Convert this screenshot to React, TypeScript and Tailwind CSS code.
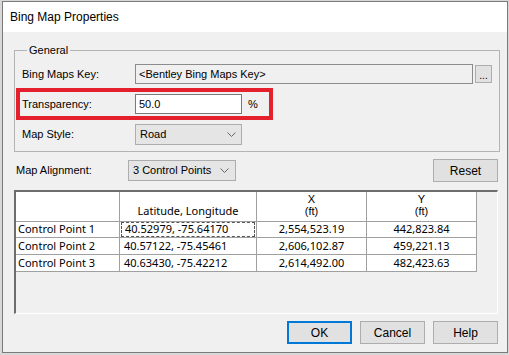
import React from 'react';

const Chevron: React.FC = () => (
  <svg width="9" height="6" viewBox="0 0 9 6" className="shrink-0">
    <polyline points="0.5,0.5 4.5,4.5 8.5,0.5" fill="none" stroke="#666" strokeWidth="1" />
  </svg>
);

const rows = [
  { name: 'Control Point 1', latLon: '40.52979, -75.64170', x: '2,554,523.19', y: '442,823.84' },
  { name: 'Control Point 2', latLon: '40.57122, -75.45461', x: '2,606,102.87', y: '459,221.13' },
  { name: 'Control Point 3', latLon: '40.63430, -75.42212', x: '2,614,492.00', y: '482,423.63' },
];

const ui = { fontFamily: '"Liberation Sans", Arial, sans-serif' };
const grid = { fontFamily: '"Noto Sans", "Open Sans", sans-serif' };

const App: React.FC = () => {
  return (
    <div className="w-[509px] h-[355px] overflow-hidden bg-[#d8d8d8] pt-[1px] pl-[2px]" style={ui}>
      <div className="w-[506px] h-[352px] border border-[#7a7a7a] flex flex-col bg-[#f0f0f0] text-black">
        {/* Title bar */}
        <div className="h-[30px] bg-white flex items-center pl-[7px] text-[12px]">Bing Map Properties</div>

        {/* Body */}
        <div className="flex-1 pt-[11px] pl-[11px] pr-[9px] text-[11px]">
          <fieldset className="w-[484px] border border-[#b4b4b4] px-[7px] pb-[6px]">
            <legend className="ml-[5px] px-[2px] leading-[14px]">General</legend>

            <div className="flex items-center h-[20px] mt-[7px]">
              <div className="w-[113px]">Bing Maps Key:</div>
              <div className="w-[338px] h-[20px] bg-[#f0f0f0] border border-[#8c8c8c] flex items-center pl-[3px]">
                &lt;Bentley Bing Maps Key&gt;
              </div>
              <div className="ml-[2px] w-[17px] h-[18px] bg-[#e1e1e1] border border-[#adadad] flex items-end justify-center text-[10px] leading-[12px]">
                ...
              </div>
            </div>

            <div className="relative flex items-center h-[20px] mt-[10px]">
              <div className="w-[113px]">Transparency:</div>
              <div className="w-[107px] h-[20px] bg-white border border-[#7a7a7a] flex items-center pl-[3px]">50.0</div>
              <div className="ml-[6px]">%</div>
              <div className="absolute left-[-6px] top-[-6px] w-[257px] h-[32px] border-[4px] border-[#e3202b]" />
            </div>

            <div className="flex items-center h-[21px] mt-[10px]">
              <div className="w-[113px]">Map Style:</div>
              <div className="w-[107px] h-[21px] bg-[#e5e5e5] border border-[#adadad] flex items-center justify-between pl-[4px] pr-[5px]">
                <span>Road</span>
                <Chevron />
              </div>
            </div>
          </fieldset>

          <div className="flex items-center h-[23px] mt-[7px]">
            <div className="ml-[2px] w-[112px]">Map Alignment:</div>
            <div className="w-[108px] h-[21px] bg-[#e5e5e5] border border-[#adadad] flex items-center justify-between pl-[4px] pr-[6px]">
              <span>3 Control Points</span>
              <Chevron />
            </div>
            <button className="ml-auto w-[65px] h-[23px] bg-[#e1e1e1] border border-[#adadad] text-[12px]">Reset</button>
          </div>

          {/* Control point grid */}
          <div
            className="mt-[8px] w-[484px] h-[124px] border-t-2 border-l-2 border-r border-b border-t-[#6d6d6d] border-l-[#6d6d6d] border-r-white border-b-white text-[11px]"
            style={grid}
          >
            <div className="grid grid-cols-[104px_137px_110px_110px]">
              <div className="h-[30px] bg-white border-r border-b border-[#a0a0a0]" />
              <div className="h-[30px] bg-white border-r border-b border-[#a0a0a0] flex items-end justify-center pb-[4px] leading-[13px]">
                Latitude, Longitude
              </div>
              <div className="h-[30px] bg-white border-r border-b border-[#a0a0a0] flex flex-col items-center justify-end pb-[4px] leading-[12px]" style={ui}>
                <span>X</span>
                <span>(ft)</span>
              </div>
              <div className="h-[30px] bg-white border-r border-b border-[#a0a0a0] flex flex-col items-center justify-end pb-[4px] leading-[12px]" style={ui}>
                <span>Y</span>
                <span>(ft)</span>
              </div>
              {rows.map((r, i) => (
                <React.Fragment key={r.name}>
                  <div className={`${i === 0 ? 'h-[16px]' : 'h-[17px]'} bg-white border-r border-b border-[#a0a0a0] flex items-center pl-[2px]`}>{r.name}</div>
                  <div className={`${i === 0 ? 'h-[16px]' : 'h-[17px]'} bg-white border-r border-b border-[#a0a0a0] flex items-center px-[1px]`}>
                    <div className={`w-full h-full flex items-center pl-[3px] ${i === 0 ? 'border border-dashed border-[#555]' : ''}`}>{r.latLon}</div>
                  </div>
                  <div className={`${i === 0 ? 'h-[16px]' : 'h-[17px]'} bg-white border-r border-b border-[#a0a0a0] flex items-center justify-center`}>{r.x}</div>
                  <div className={`${i === 0 ? 'h-[16px]' : 'h-[17px]'} bg-white border-r border-b border-[#a0a0a0] flex items-center justify-center`}>{r.y}</div>
                </React.Fragment>
              ))}
            </div>
          </div>

          {/* Dialog buttons */}
          <div className="flex justify-end gap-[8px] mt-[7px] text-[12px]">
            <button className="w-[65px] h-[23px] bg-[#e1e1e1] border-2 border-[#0078d7]">OK</button>
            <button className="w-[65px] h-[23px] bg-[#e1e1e1] border border-[#adadad]">Cancel</button>
            <button className="w-[65px] h-[23px] bg-[#e1e1e1] border border-[#adadad]">Help</button>
          </div>
        </div>
      </div>
    </div>
  );
};

export default App;
